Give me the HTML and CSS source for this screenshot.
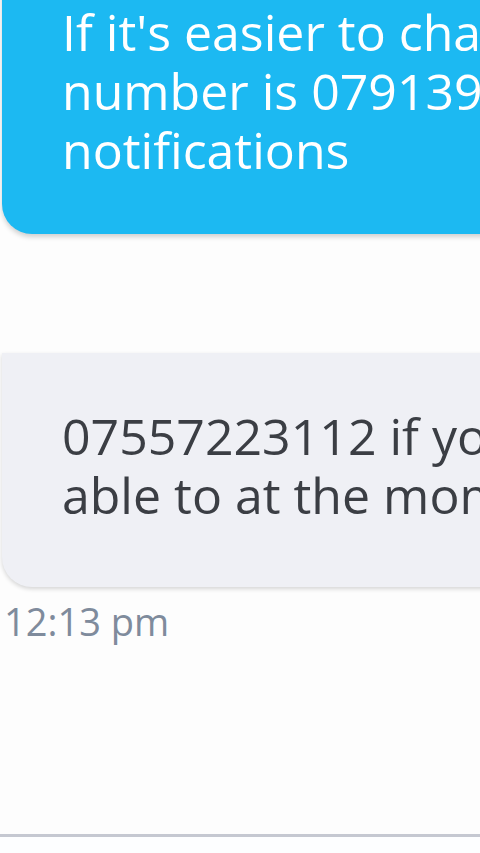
FILE: index.html
```html
<!DOCTYPE html>
<html lang="en">
<head>
  <meta charset="UTF-8">
  <meta name="viewport" content="width=device-width, initial-scale=1.0">
  <title>Chat</title>
  <link rel="stylesheet" href="styles.css">
</head>
<body>
  <div class="chat">
    <div class="chat-messages">
      <!-- outgoing -->
      <div class="message out-message">
        If it's easier to chat on WhatsApp my<br>
        number is 07913985624 as I get the<br>
        notifications
      </div>

      <!-- incoming -->
      <div class="message in-message">
        07557223112 if you are not<br>
        able to at the moment
      </div>
      <div class="message-time">12:13 pm</div>
    </div>
    <div class="chat-input-bar"></div>
  </div>
</body>
</html>
```

FILE: styles.css
```css
/* base */
* {
  box-sizing: border-box;
  margin: 0;
  padding: 0;
}

html, body {
  width: 480px;
  height: 853px;
  overflow: hidden;
  background-color: #fdfdfd;
  font-family: 'Open Sans', 'Noto Sans', sans-serif;
}

.chat {
  display: flex;
  flex-direction: column;
  height: 853px;
}

/* message list, newest at the bottom */
.chat-messages {
  height: 834px;
  overflow: hidden;
  display: flex;
  flex-direction: column;
  justify-content: flex-end;
  padding-bottom: 187px;
}

.message {
  flex-shrink: 0;
  width: 900px;
  margin-left: 2px;
  font-size: 50px;
  line-height: 59px;
  white-space: nowrap;
}

.out-message {
  background-color: #1cb9f2;
  color: #fff;
  padding: 60px 40px 54px 60px;
  border-radius: 30px;
  box-shadow: 0 3px 5px rgba(0, 0, 0, 0.18);
}

.in-message {
  margin-top: 119px;
  background-color: #eff0f5;
  color: #3b3e44;
  padding: 54px 40px 62px 60px;
  border-radius: 0 30px 30px 30px;
  box-shadow: 0 2px 4px rgba(0, 0, 0, 0.16);
}

.message-time {
  margin-top: 8px;
  padding-left: 4px;
  font-size: 38px;
  line-height: 52px;
  color: #7f8b9c;
}

/* input bar top edge */
.chat-input-bar {
  flex: 1;
  border-top: 3px solid #c5c8d1;
  background-color: #fdfeff;
}
```
